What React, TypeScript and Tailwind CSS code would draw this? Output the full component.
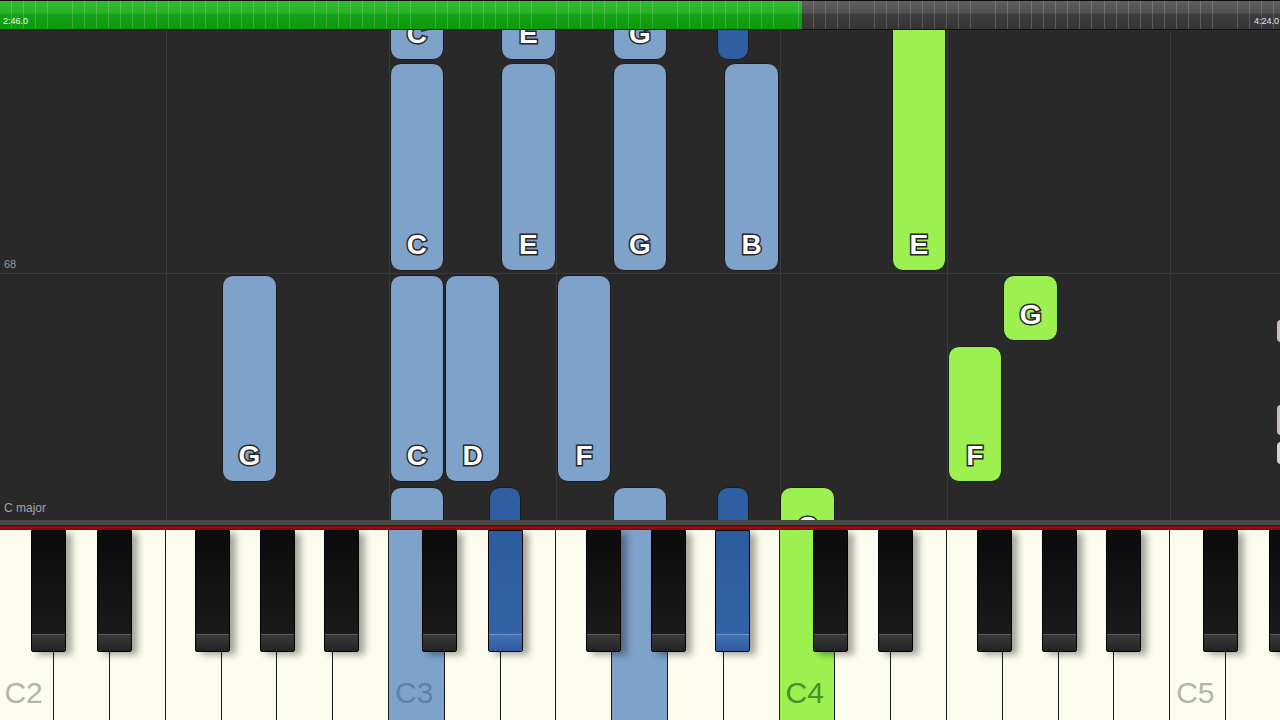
import React from "react"

type Tone = "light" | "dark" | "green"

type Note = {
  left: number
  width: number
  top: number
  height: number
  tone: Tone
  label?: string
}

// keyboard geometry (px), C2 is white key 0
const KEY_W = 55.8
const KEY_X0 = -1.6
const BLACK_OFFSETS = [33, 98.5, 197, 262, 326]

const wx = (i: number) => KEY_X0 + i * KEY_W
const bx = (oct: number, n: number) => KEY_X0 + oct * 7 * KEY_W + BLACK_OFFSETS[n]

const noteBg: Record<Tone, string> = {
  light: "bg-[#7ea2ca]",
  dark: "bg-[#2f5ea3]",
  green: "bg-[#9cf050]",
}

const w = (i: number, top: number, height: number, tone: Tone, label?: string): Note => ({
  left: wx(i) + 0.5,
  width: 54.5,
  top,
  height,
  tone,
  label,
})

const b = (oct: number, n: number, top: number, height: number): Note => ({
  left: bx(oct, n) + 1.5,
  width: 32,
  top,
  height,
  tone: "dark",
})

const notes: Note[] = [
  // partly off the top
  w(7, -150, 180, "light", "C"),
  w(9, -150, 180, "light", "E"),
  w(11, -150, 180, "light", "G"),
  b(1, 4, -150, 180),
  // chord
  w(7, 33, 208, "light", "C"),
  w(9, 33, 208, "light", "E"),
  w(11, 33, 208, "light", "G"),
  w(13, 33, 208, "light", "B"),
  w(16, -60, 301, "green", "E"),
  // next bar
  w(4, 245, 207, "light", "G"),
  w(7, 245, 207, "light", "C"),
  w(8, 245, 207, "light", "D"),
  w(10, 245, 207, "light", "F"),
  w(18, 245, 66, "green", "G"),
  w(17, 316, 136, "green", "F"),
  // hitting the keys now
  w(7, 457, 120, "light", "C"),
  b(1, 1, 457, 120),
  w(11, 457, 120, "light", "G"),
  b(1, 4, 457, 120),
  w(14, 457, 66, "green", "C"),
]

const gridLines = [3, 7, 10, 14, 17, 21].map(wx)

const whiteKeys = Array.from({ length: 23 }, (_, i) => i)
const keyLabels: Record<number, string> = { 0: "C2", 7: "C3", 14: "C4", 21: "C5" }
const pressedWhite: Record<number, Tone> = { 7: "light", 11: "light", 14: "green" }

const blackKeys: { left: number; pressed: boolean }[] = []
for (let oct = 0; oct < 4; oct++) {
  BLACK_OFFSETS.forEach((_, n) => {
    const left = bx(oct, n)
    if (left < 1280) blackKeys.push({ left, pressed: oct === 1 && (n === 1 || n === 4) })
  })
}

const ticks =
  "bg-[repeating-linear-gradient(90deg,transparent_0_11.1px,rgba(255,255,255,0.17)_11.1px_12.1px)]"

function TopBar() {
  return (
    <div className="flex h-[30px] border-b border-[#121212] bg-[#101010] pt-px">
      <div className="w-[802px] bg-[linear-gradient(to_bottom,#33bc33,#25b125_42%,#14a214_48%,#0c990c)]">
        <div className={`flex h-full items-end pb-[3px] pl-[3px] ${ticks}`}>
          <span className="text-[9px] leading-none text-[#eefcee]">2:46.0</span>
        </div>
      </div>
      <div className="flex-1 bg-[linear-gradient(to_bottom,#5e5e5e,#505050_42%,#3d3d3d_48%,#343434)]">
        <div className={`flex h-full items-end justify-end pb-[3px] pr-px ${ticks}`}>
          <span className="text-[9px] leading-none text-[#e4e4e4]">4:24.0</span>
        </div>
      </div>
    </div>
  )
}

function Roll() {
  return (
    <div className="relative h-[490px] overflow-hidden bg-[#292929]">
      {gridLines.map((x) => (
        <div key={x} className="absolute top-0 bottom-0 w-px bg-[#3a3a3a]" style={{ left: x }} />
      ))}
      <div className="absolute left-0 right-0 top-[243px] h-px bg-[#3a3a3a]" />
      <span className="absolute left-[4px] top-[229px] text-[11px] leading-none text-[#9a9a9a]">68</span>

      {notes.map((n, i) => (
        <div
          key={i}
          className={`absolute flex flex-col items-center justify-end pb-[11px] rounded-[11px] border border-[#1c1c1c] ${noteBg[n.tone]}`}
          style={{ left: n.left, top: n.top, width: n.width, height: n.height }}
        >
          {n.label && (
            <span className="text-[28px] font-bold leading-none text-white [-webkit-text-stroke:3px_#262626] [paint-order:stroke_fill]">
              {n.label}
            </span>
          )}
        </div>
      ))}

      <span className="absolute left-[4px] top-[472px] text-[12px] leading-none text-[#a3a3a3]">C major</span>

      {/* edge markers, cut off on the right */}
      <div className="absolute left-[1277px] top-[290px] h-[22px] w-[4px] rounded-l-sm bg-[#c9bcc2]" />
      <div className="absolute left-[1277px] top-[375px] h-[30px] w-[4px] rounded-l-sm bg-[#c9bcc2]" />
      <div className="absolute left-[1277px] top-[412px] h-[22px] w-[4px] rounded-l-sm bg-[#d8d0d4]" />
    </div>
  )
}

function Keyboard() {
  return (
    <div>
      <div className="h-[5px] bg-[#4a4a4a]" />
      <div className="h-[5px] bg-[linear-gradient(to_bottom,#5e0606,#9a1111,#6e0808)]" />
      <div className="relative h-[190px] overflow-hidden">
        <div className="ml-[-1.6px] flex h-full">
          {whiteKeys.map((i) => {
            const tone = pressedWhite[i]
            const bg =
              tone === "light" ? "bg-[#7ea2ca]" : tone === "green" ? "bg-[#9cf050]" : "bg-[#fdfdef]"
            const labelColor =
              tone === "light" ? "text-[#5d80aa]" : tone === "green" ? "text-[#4f8c2b]" : "text-[#b4b4aa]"
            return (
              <div
                key={i}
                className={`flex h-full w-[55.8px] shrink-0 flex-col justify-end border-r-[1.5px] border-[#1b1b1b] pb-[12px] pl-[6px] ${bg}`}
              >
                {keyLabels[i] && (
                  <span className={`text-[30px] leading-none ${labelColor}`}>{keyLabels[i]}</span>
                )}
              </div>
            )
          })}
        </div>

        {blackKeys.map((k) => (
          <div
            key={k.left}
            className={`absolute top-0 flex h-[122px] w-[35px] flex-col justify-end rounded-b-[2px] border-[1.5px] border-black shadow-[6px_3px_7px_rgba(0,0,0,0.35)] ${
              k.pressed
                ? "bg-linear-to-b from-[#2d5b9f] to-[#3363a8]"
                : "bg-linear-to-b from-[#0b0b0b] to-[#1d1d1d]"
            }`}
            style={{ left: k.left }}
          >
            <div
              className={`h-[17px] rounded-b-[2px] border-t ${
                k.pressed
                  ? "border-[#6f94c8] bg-linear-to-b from-[#4271b6] to-[#2e5b9e]"
                  : "border-[#5c5c5c] bg-linear-to-b from-[#3a3a3a] to-[#232323]"
              }`}
            />
          </div>
        ))}
      </div>
    </div>
  )
}

export default function App() {
  return (
    <div className="h-[720px] w-[1280px] overflow-hidden bg-[#292929] font-['Liberation_Sans',Arial,sans-serif]">
      <TopBar />
      <Roll />
      <Keyboard />
    </div>
  )
}
